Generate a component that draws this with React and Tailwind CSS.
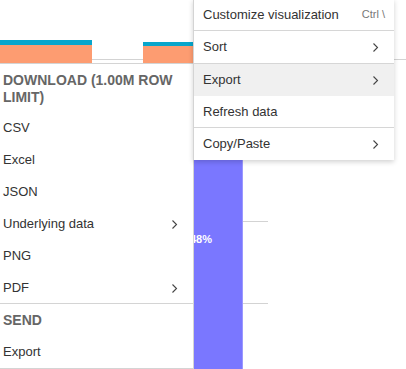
import React from 'react'

const font = { fontFamily: '"Liberation Sans", Arial, sans-serif' }

function Chevron() {
  return (
    <svg width="7" height="11" viewBox="0 0 7 11" className="shrink-0">
      <path d="M1.5 1.5 L5.5 5.5 L1.5 9.5" fill="none" stroke="#444" strokeWidth="1.1" />
    </svg>
  )
}

function LeftItem({ label, arrow }) {
  return (
    <div className="h-[32px] flex items-center justify-between pl-[3px] pr-[15px] pt-[2px] text-[13px] text-[#333]">
      <span>{label}</span>
      {arrow && <Chevron />}
    </div>
  )
}

function RightItem({ label, arrow, hint, active, className = '' }) {
  return (
    <div
      className={`flex items-center justify-between pl-[9px] pr-[15px] text-[13px] text-[#333] ${
        active ? 'bg-[#f0f0f0]' : ''
      } ${className}`}
    >
      <span>{label}</span>
      {hint && <span className="text-[11px] text-[#777] mr-[-6px]">{hint}</span>}
      {arrow && <Chevron />}
    </div>
  )
}

export default function App() {
  return (
    <div className="relative w-[406px] h-[369px] overflow-hidden bg-white" style={font}>
      {/* chart behind the menus */}
      <svg className="absolute inset-0" width="406" height="369">
        <line x1="0" y1="59.5" x2="406" y2="59.5" stroke="#d3d3d3" />
        <rect x="0" y="40" width="92" height="5" fill="#08a6cc" />
        <rect x="0" y="45" width="92" height="20" fill="#fd9c71" />
        <rect x="143" y="42" width="51" height="4" fill="#08a6cc" />
        <rect x="143" y="46" width="51" height="19" fill="#fd9c71" />
        <line x1="243" y1="221.5" x2="268" y2="221.5" stroke="#d3d3d3" />
        <line x1="243" y1="303.5" x2="268" y2="303.5" stroke="#d3d3d3" />
        <rect x="193" y="160" width="49" height="209" fill="#7a77ff" />
        <rect x="242" y="160" width="1" height="209" fill="#9b98ff" />
        <text x="190" y="243" fill="#fff" fontSize="11" fontWeight="bold" fontFamily="Liberation Sans, Arial, sans-serif">
          48%
        </text>
      </svg>

      {/* export submenu */}
      <div className="absolute left-0 top-[63px] w-[194px] h-[306px] bg-white border-t border-r border-b border-[#d4d4d4] flex flex-col">
        <div className="pl-[3px] pr-[10px] pt-[8px] pb-[5px] text-[14px] leading-[17px] font-bold text-[#666]">
          DOWNLOAD (1.00M ROW LIMIT)
        </div>
        <LeftItem label="CSV" />
        <LeftItem label="Excel" />
        <LeftItem label="JSON" />
        <LeftItem label="Underlying data" arrow />
        <LeftItem label="PNG" />
        <LeftItem label="PDF" arrow />
        <div className="border-t border-[#d4d4d4] h-[32px] flex items-center pl-[3px] pt-[1px] text-[14px] font-bold text-[#666]">
          SEND
        </div>
        <LeftItem label="Export" />
      </div>

      {/* main context menu */}
      <div className="absolute left-[193px] top-[-1px] w-[201px] bg-white border-l border-[#d4d4d4] shadow-[0_2px_5px_rgba(0,0,0,0.18)] flex flex-col">
        <RightItem label="Customize visualization" hint="Ctrl \" className="h-[32px] border-b border-[#d6d6d6]" />
        <RightItem label="Sort" arrow className="h-[33px] border-b border-[#d6d6d6]" />
        <RightItem label="Export" arrow active className="h-[32px]" />
        <RightItem label="Refresh data" className="h-[32px] border-b border-[#d6d6d6]" />
        <RightItem label="Copy/Paste" arrow className="h-[32px]" />
      </div>
    </div>
  )
}
